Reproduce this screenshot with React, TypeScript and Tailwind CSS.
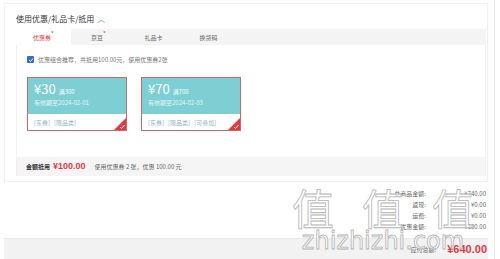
import React from "react";

const coupons = [
  { amount: "30", limit: "满300", date: "有效期至2024-02-01", tags: ["[东券]", "[限品类]"] },
  { amount: "70", limit: "满700", date: "有效期至2024-02-03", tags: ["[东券]", "[限品类]", "[可叠加]"] },
];

const tabs = [
  { name: "优惠券", star: true, active: true },
  { name: "京豆", star: true },
  { name: "礼品卡" },
  { name: "换货码" },
];

const totals = [
  ["总商品金额:", "¥740.00"],
  ["返现:", "¥0.00"],
  ["运费:", "¥0.00"],
  ["优惠金额:", "-¥100.00"],
];

function Coupon({ c }: { c: (typeof coupons)[number] }) {
  return (
    <div className="relative w-[100px] h-[54px] border border-[#c86a6a] bg-white flex flex-col">
      <div className="h-[36px] bg-[#7dcfd4] px-[6px] pt-[4px] text-white">
        <div className="flex items-baseline gap-[3px] leading-none">
          <span className="text-[13px]">¥{c.amount}</span>
          <span className="text-[6px]">{c.limit}</span>
        </div>
        <div className="mt-[5px] text-[6px] leading-none text-white/80">{c.date}</div>
      </div>
      <div className="flex-1 flex items-center gap-[4px] px-[6px] text-[6px] text-[#8fb8bd]">
        {c.tags.map((t) => (
          <span key={t}>{t}</span>
        ))}
      </div>
      <div className="absolute right-0 bottom-0 w-[12px] h-[12px]">
        <svg width="12" height="12" viewBox="0 0 12 12">
          <path d="M12 0 L12 12 L0 12 Z" fill="#e4393c" />
          <path d="M6 9 L7.5 10.5 L10.5 7" stroke="#fff" strokeWidth="1" fill="none" />
        </svg>
      </div>
    </div>
  );
}

export default function App() {
  return (
    <div
      className="relative w-[500px] h-[259px] bg-white overflow-hidden text-[#333]"
      style={{ fontFamily: '"Noto Sans CJK SC", "Noto Sans", sans-serif' }}
    >
      <div className="w-[495px] h-full border-r border-[#ececec] flex flex-col">
        {/* coupon panel */}
        <div className="ml-[4px] w-[484px] mt-[3px] border border-[#f0f0f0] pl-[11px] pr-[1px] pt-[10px] pb-[5px]">
          <div className="flex items-center gap-[3px] text-[8px] leading-[10px] text-[#333]">
            <span>使用优惠/礼品卡/抵用</span>
            <span className="text-[#999] text-[8px]">︿</span>
          </div>

          {/* tabs */}
          <div className="mt-[5px] flex h-[16px] bg-[#f4f4f4]">
            {tabs.map((t) => (
              <div
                key={t.name}
                className={`w-[55px] flex items-center justify-center text-[6px] ${
                  t.active ? "bg-white text-[#e4393c]" : "text-[#666]"
                }`}
              >
                {t.name}
                {t.star && <sup className="text-[#e4393c] text-[6px]">*</sup>}
              </div>
            ))}
          </div>

          {/* tab body */}
          <div className="border-x border-[#f0f0f0] flex flex-col">
            <div className="mt-[10px] pl-[10px] flex items-center gap-[4px] text-[6px] text-[#777]">
              <span className="w-[7px] h-[7px] rounded-[1px] bg-[#2f6fd6] flex items-center justify-center">
                <svg width="6" height="6" viewBox="0 0 6 6">
                  <path d="M1 3 L2.5 4.5 L5 1.5" stroke="#fff" strokeWidth="1" fill="none" />
                </svg>
              </span>
              <span>优惠组合推荐，共抵用100.00元，使用优惠券2张</span>
            </div>

            <div className="mt-[13px] pl-[10px] flex gap-[14px]">
              {coupons.map((c) => (
                <Coupon key={c.amount} c={c} />
              ))}
            </div>

            <div className="mt-[26px] h-[19px] bg-[#f5f5f5] flex items-center pl-[9px] text-[6px] text-[#666]">
              <span className="text-[#333] font-bold">金额抵用</span>
              <span
                className="ml-[3px] text-[9px] font-bold text-[#e4393c]"
                style={{ fontFamily: '"Liberation Sans", sans-serif' }}
              >
                ¥100.00
              </span>
              <span className="ml-[9px]">使用优惠券 2 张，优惠 100.00 元</span>
            </div>
          </div>
        </div>

        {/* totals */}
        <div className="flex-1 flex flex-col justify-end items-end pr-[8px] pb-[6px] text-[6px] leading-[10px] text-[#666] gap-[1px]">
          {totals.map(([k, v]) => (
            <div key={k} className="flex">
              <span className="text-right">{k}</span>
              <span className="w-[60px] text-right">{v}</span>
            </div>
          ))}
        </div>

        <div className="ml-[4px] w-[484px] h-[21px] bg-[#f2f2f2] border-t border-[#eaeaea] flex items-center justify-end pr-[1px] gap-[11px]">
          <span className="text-[6px] text-[#666]">应付总额:</span>
          <span
            className="text-[11px] font-bold text-[#e4393c]"
            style={{ fontFamily: '"Liberation Sans", sans-serif' }}
          >
            ¥640.00
          </span>
        </div>
      </div>

      {/* watermark */}
      <div className="absolute left-[288px] top-[184px] w-[190px] flex flex-col items-center pointer-events-none">
        <div className="w-[190px] flex justify-between text-[42px] leading-[46px] text-white/70" style={{ WebkitTextStroke: "0.8px #b4b4b4" }}>
          <span className="w-[50px] text-center">值</span>
          <span className="w-[50px] text-center">值</span>
          <span className="w-[50px] text-center">值</span>
        </div>
        <div
          className="text-[24px] leading-[22px] text-white/70"
          style={{ WebkitTextStroke: "0.8px #b4b4b4", fontFamily: '"DejaVu Sans", sans-serif' }}
        >
          zhizhizhi.com
        </div>
      </div>
    </div>
  );
}
